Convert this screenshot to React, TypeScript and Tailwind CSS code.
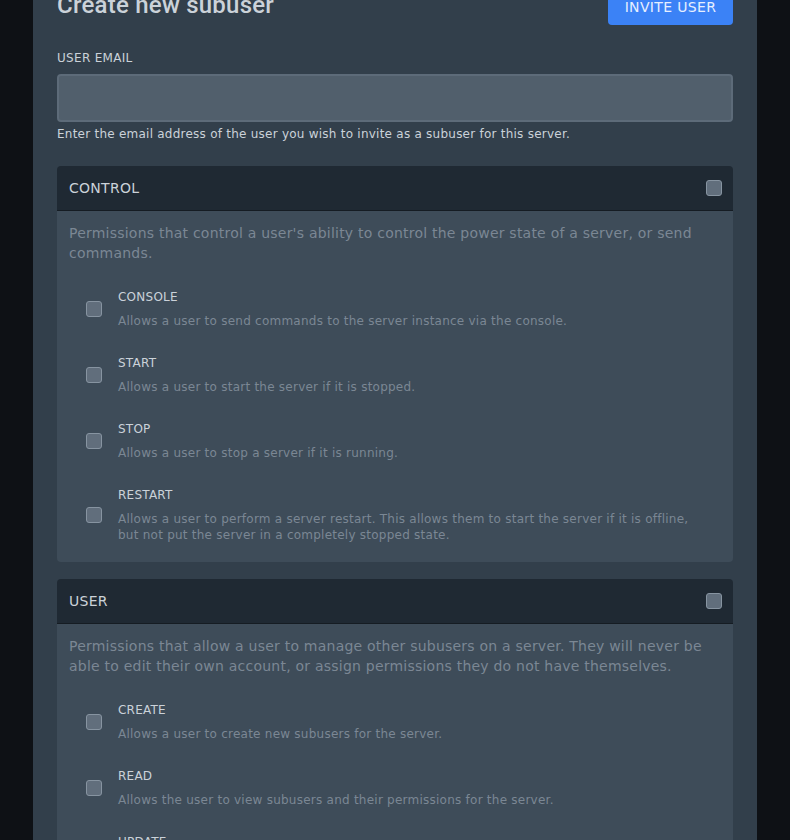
import React from "react";

const body = { fontFamily: '"DejaVu Sans", sans-serif' };

function Box() {
  return <div className="h-4 w-4 shrink-0 rounded-[3px] border border-[#8794a1] bg-[#616e7c]" />;
}

type Perm = { name: string; desc: string };

function Section({ title, desc, perms, className = "" }: { title: string; desc: string; perms: Perm[]; className?: string }) {
  return (
    <div className={"rounded-[4px] overflow-hidden " + className}>
      <div className="flex h-[45px] items-center justify-between bg-[#1f2933] pl-3 pr-[11px] border-b border-[#151c23]">
        <span className="text-[14px] tracking-[0.02em] text-[#cbd2d9]">{title}</span>
        <Box />
      </div>
      <div className="bg-[#3e4c59] px-3 pt-3 pb-[6px]">
        <p className="text-[14px] leading-5 tracking-[0.016em] text-[#7b8794]">{desc}</p>
        <div className="mt-[13px]">
          {perms.map((p) => (
            <div key={p.name} className="flex items-center py-[13px] pl-[17px] pr-6">
              <Box />
              <div className="ml-4 flex-1">
                <div className="text-[12px] leading-4 tracking-[0.02em] text-[#cbd2d9]">{p.name}</div>
                <div className="mt-2 text-[12px] leading-4 tracking-[0.02em] text-[#7b8794]">{p.desc}</div>
              </div>
            </div>
          ))}
        </div>
      </div>
    </div>
  );
}

export default function App() {
  return (
    <div className="h-[840px] overflow-hidden bg-[#0e1115] flex justify-center" style={body}>
      <div className="w-[724px] bg-[#323f4b] px-6">
        <div className="-mt-[11px] flex items-start justify-between">
          <h2
            className="text-[24px] leading-8 font-medium tracking-[0.01em] text-[#cbd2d9]"
            style={{ fontFamily: "Roboto, sans-serif" }}
          >
            Create new subuser
          </h2>
          <button className="h-9 w-[125px] rounded-[4px] bg-[#3b82f6] text-[14px] tracking-wide text-[#e6efff]">
            INVITE USER
          </button>
        </div>
        <label className="mt-[25px] block text-[12px] leading-4 tracking-wide text-[#cbd2d9]">USER EMAIL</label>
        <div className="mt-2 h-[48px] rounded-[4px] border-2 border-[#5d6b79] bg-[#515f6c]" />
        <p className="mt-1 text-[12px] leading-4 tracking-[0.02em] text-[#cbd2d9]">
          Enter the email address of the user you wish to invite as a subuser for this server.
        </p>
        <Section
          className="mt-[24px]"
          title="CONTROL"
          desc="Permissions that control a user's ability to control the power state of a server, or send commands."
          perms={[
            { name: "CONSOLE", desc: "Allows a user to send commands to the server instance via the console." },
            { name: "START", desc: "Allows a user to start the server if it is stopped." },
            { name: "STOP", desc: "Allows a user to stop a server if it is running." },
            {
              name: "RESTART",
              desc: "Allows a user to perform a server restart. This allows them to start the server if it is offline, but not put the server in a completely stopped state.",
            },
          ]}
        />
        <Section
          className="mt-[17px]"
          title="USER"
          desc="Permissions that allow a user to manage other subusers on a server. They will never be able to edit their own account, or assign permissions they do not have themselves."
          perms={[
            { name: "CREATE", desc: "Allows a user to create new subusers for the server." },
            { name: "READ", desc: "Allows the user to view subusers and their permissions for the server." },
            { name: "UPDATE", desc: "Allows a user to modify other subusers." },
            { name: "DELETE", desc: "Allows a user to delete a subuser from the server." },
          ]}
        />
      </div>
    </div>
  );
}
